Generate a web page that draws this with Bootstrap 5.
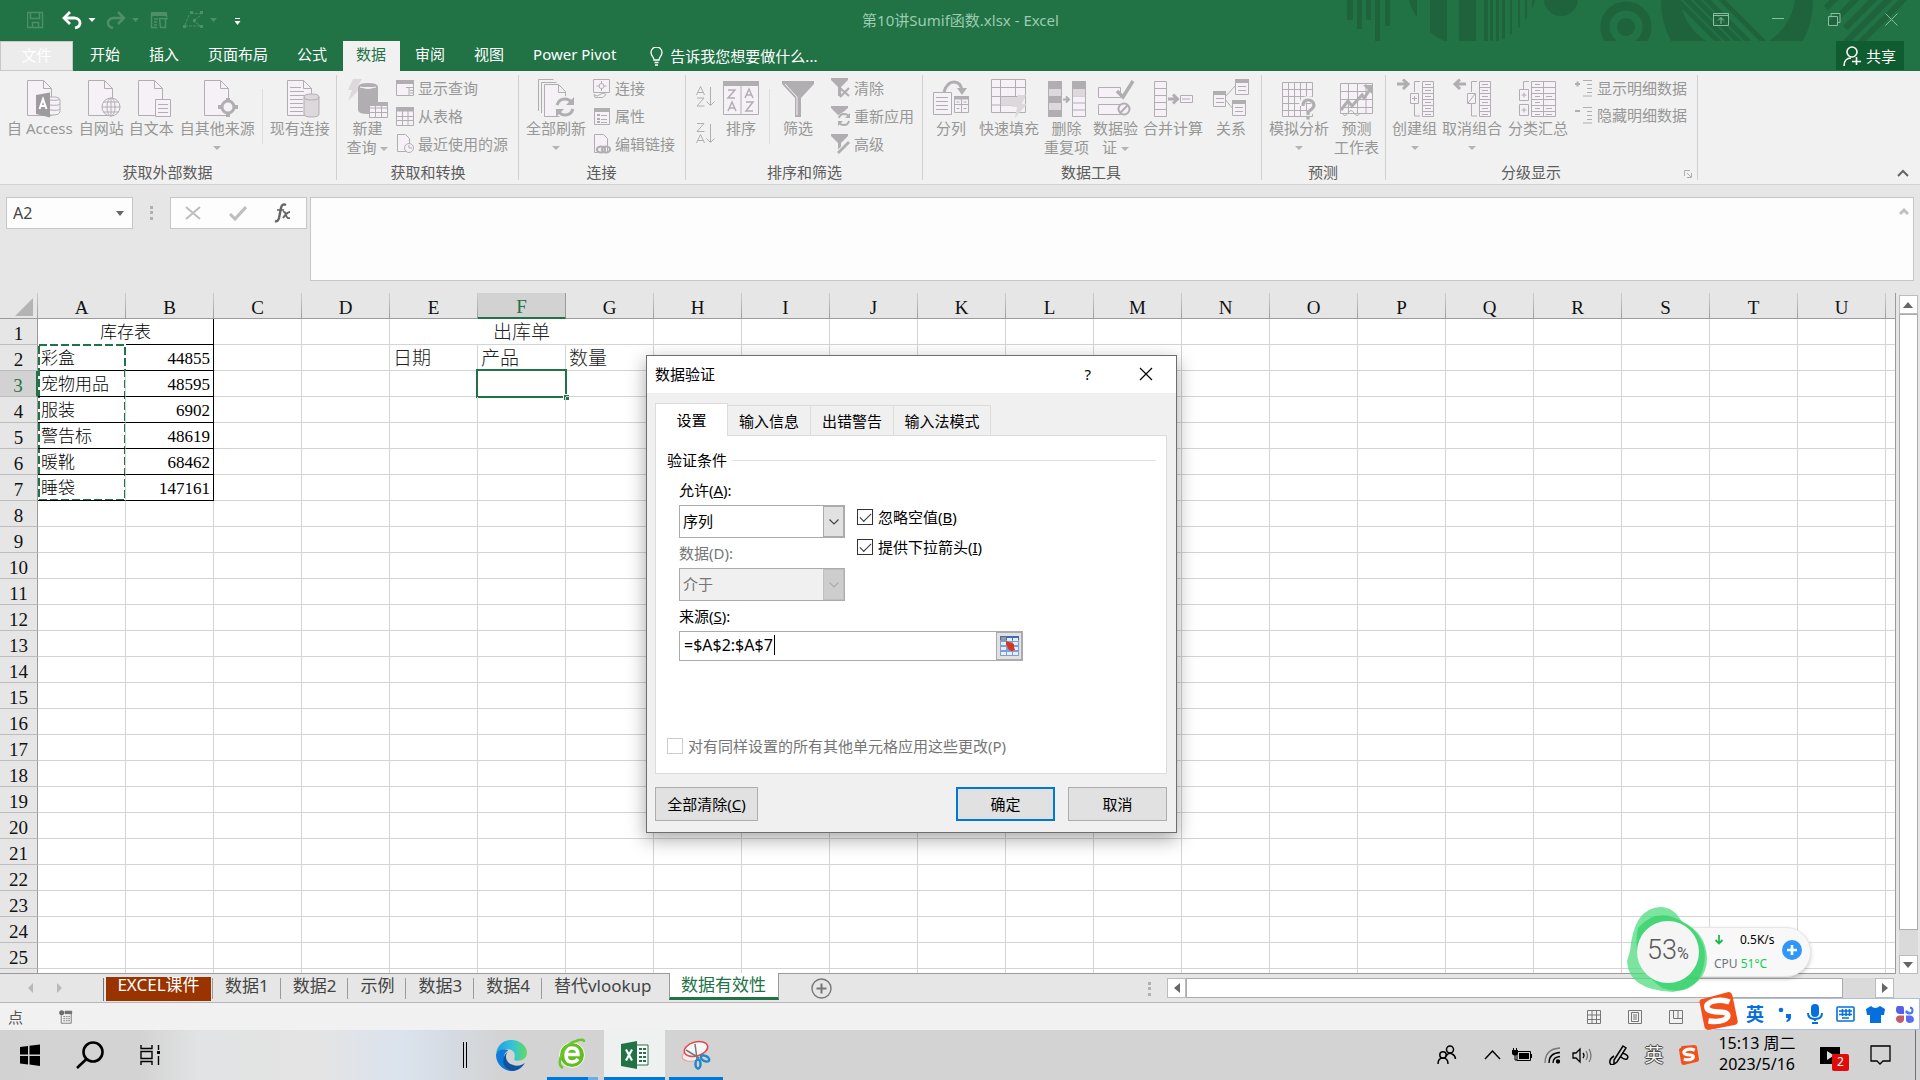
<!DOCTYPE html>
<html lang="zh-CN">
<head>
<meta charset="utf-8">
<meta name="viewport" content="width=device-width, initial-scale=1">
<title>第10讲Sumif函数.xlsx - Excel</title>
<link href="https://cdn.jsdelivr.net/npm/bootstrap@5.3.0/dist/css/bootstrap.min.css" rel="stylesheet">
<style>
:root{--xl:#217346;--line:#d4d4d4;--chrome:#e6e6e6}
body{font-family:"Noto Sans","Noto Sans CJK SC",sans-serif;font-size:15px;line-height:20px;color:#000;background:var(--chrome);overflow:hidden}
button{font:inherit;color:inherit;background:none;border:0;padding:0}
svg{display:block;flex:none}
a{color:inherit;text-decoration:none}
/* title */
.titlebar{background:var(--xl);color:#9ccbb0;height:41px}
.title-side{flex:1 1 0}
.title-name{margin:0 26px 2px 0}
.art{right:0;top:0}
.qat{padding:0 0 2px 27px}
.win button{width:57px;height:38px;display:flex;align-items:center;justify-content:center}
.tabs-row{background:var(--xl);height:30px;color:#fff}
.tabs-row .nav-link{padding:0 14px 0 15px;line-height:26px;height:30px;color:#fff;border-radius:0}
.tabs-row .file-tab{width:73px;margin-right:2px;padding:0;text-align:center;background:#ececec;border:1px solid #c8c8c8}
.tabs-row .nav-link.active{background:#f1f1f1;color:var(--xl);width:57px;margin-left:2px;padding:0 0 0 13px}
.tell{padding-left:20px;gap:7px}
.share{background:#0f5c30;height:29px;width:68px;margin-right:16px;padding-left:7px;gap:4px}
/* ribbon */
.ribbon{background:#f1f1f1;height:114px;border-bottom:1px solid #d2d2d2;color:#979797}
.rgroup{padding-top:3px;position:relative}
.rgroup::after{content:"";position:absolute;right:0;top:4px;bottom:4px;width:1px;background:#d0d0d0}
.rgroup h2{font-size:15px;line-height:20px;color:#5c5c5c;margin:4px 0 0;padding-right:6px;font-weight:400;text-align:center}
.g1{width:337px;padding-left:4px}.g2{width:182px;padding-left:6px}.g3{width:167px;padding-left:4px}.g4{width:237px;padding-left:6px}
.g5{width:339px;padding-left:3px}.g6{width:124px;padding-left:4px}.g7{width:312px;padding-left:4px}
.g1 .tools{gap:1px}
.g1 .big svg.ic{margin-left:8px}
.g7 h2{padding-right:26px}
.g7 .sml{height:27px}
.tools{height:84px}
.big{display:flex;flex-direction:column;align-items:center;padding:5px 3px 0;line-height:19px;white-space:nowrap}
.big svg.ic{margin-bottom:2px}
.w2{width:50px}.w3{width:49px}.w4{width:66px}
.car{border:4px solid transparent;border-top-color:#b4b4b4;border-bottom:0;display:inline-block;width:0;height:0}
.big>.car{margin-top:8px}
.sml{display:flex;align-items:center;height:28px;gap:4px;white-space:nowrap}
.rsep{width:1px;height:55px;margin:15px 3px 0 3px;background:#dcdcdc}
.ic{fill:none;stroke:#b1aeb2;stroke-width:1;overflow:visible}
.pf{fill:#f5f1f7}.df{fill:#b1aeb2;stroke:none}.lf{fill:#dcd8dc;stroke:none}
.lnch{right:6px;bottom:6px}
/* formula bar */
.fbar{padding:12px 6px 0;height:108px}
.namebox{width:127px;height:32px;border:1px solid #c6c6c6;background:#fdfdfd}
.namebox input{border:0;background:none;width:90px;padding:0 0 0 6px;font-size:16px;color:#444;line-height:24px}
.fbtns{width:137px;height:32px;border:1px solid #c6c6c6;background:#fdfdfd;margin-left:16px;padding:0 14px}
.ftext{height:84px;border:1px solid #c6c6c6;background:#fdfdfd;resize:none;margin-left:3px}
/* sheet */
.book{flex:1 1 0;min-height:0}
.sheet{background:#fff;border-right:1px solid #9b9b9b;border-bottom:1px solid #9b9b9b;overflow:hidden;margin-right:3px}
.xl{table-layout:fixed;border-collapse:separate;border-spacing:0;width:1974px;font-family:"Liberation Serif","Noto Sans CJK SC",serif}
.xl th{font-weight:400;font-size:19px;text-align:center;background:var(--chrome);padding:3px 0 0;line-height:21px;color:#111;height:26px}
.xl thead th{border-bottom:1px solid #9b9b9b;border-right:1px solid;border-image:linear-gradient(#cfcfcf,#9b9b9b) 1;height:26px}
.xl tbody th{border-right:1px solid #9b9b9b;border-bottom:1px solid #bdbdbd;padding-right:6px;padding-left:6px}
.xl td{border-right:1px solid var(--line);border-bottom:1px solid var(--line);height:26px;padding:3px 3px 0;line-height:22px;font-size:19px;font-weight:300;white-space:nowrap;overflow:visible;position:relative;color:#222}
.xl .inv{font-size:17px;border-bottom-color:#000;color:#000}
.xl .bk{border-right-color:#000}
.xl .num{text-align:right;padding-right:3px}
.xl thead th.on{background:#d2d2d2;color:var(--xl);border-image:none;border-right-color:#9b9b9b;border-bottom:2px solid var(--xl)}
.xl tbody th.on{background:#d2d2d2;color:var(--xl);border-right:2px solid var(--xl)}
.ants{position:absolute;left:0;top:-1px;width:89px;height:157px;pointer-events:none}
.cursor-box{position:absolute;left:-2px;top:-2px;right:-2px;bottom:-2px;border:2px solid var(--xl)}
.cursor-box::after{content:"";position:absolute;right:-4px;bottom:-4px;width:6px;height:6px;background:var(--xl);border:1px solid #fff;border-right:0;border-bottom:0}
.vsb{width:20px;margin-right:2px;padding-top:2px}
.sb-btn{background:#fff;border:1px solid #bcbcbc;display:flex;align-items:center;justify-content:center;flex:none}
.vsb .sb-btn{height:19px}
.vthumb{background:#fff;border:1px solid #ababab;height:616px}
.track{background:#dadada}
/* sheet tabs */
.stabs{height:29px;border-bottom:1px solid #b6b6b6;font-size:17px;line-height:20px;color:#444}
.stabs .tb{padding:0 11px 5px 12px;height:21px;border-left:1px solid #9b9b9b;margin-top:4px;line-height:15px}
.stabs .red{background:#993300;color:#fff;margin:3px 1px 0 2px;border:0;width:105px;text-align:center;padding:0;height:24px;line-height:15px}
.stabs .act{background:#fff;color:var(--xl);width:110px;height:27px;margin:-1px 0 0 6px;border:1px solid #9b9b9b;border-top:0;border-bottom:3px solid var(--xl);padding:0;text-align:center;line-height:23px}
.hsb{margin-right:26px;height:20px;margin-top:4px}
.hsb .sb-btn{width:19px}
.hthumb{background:#fff;border:1px solid #ababab;width:657px}
.status{height:27px;background:#f1f1f1;color:#555;padding:0 0 0 8px}
.views{gap:27px;margin-right:237px}
/* taskbar */
.task{height:50px;background:linear-gradient(90deg,#d2d2d2 0,#d3d3d3 140px,#e2e3e4 200px,#e4e4e4 320px,#dbe3ee 400px,#d5dbe3 450px,#d3d3d3 500px,#d3d3d3 100%)}
.tk{height:50px;display:flex;align-items:center;justify-content:center;flex:none}
.tk-run{border-bottom:3px solid #0078d7;padding-top:3px}
.tk360{width:63px}.tkxl{width:61px}.tksnip{width:54px}
.clock{width:100px;font-size:16px;line-height:21px;padding-bottom:2px}
.b30{width:30px}.b34{width:34px}.b36{width:36px}.b46{width:46px}.b54{width:54px}.b60{width:60px}
/* dialog */
.dlg{left:646px;top:355px;width:531px;border:1px solid #6e6e6e;background:#f0f0f0;box-shadow:0 6px 18px rgba(0,0,0,.35)}
.dlg-head{background:#fff;height:37px;padding:0 23px 2px 8px}
.dlg-body{padding:10px 9px 11px 8px}
.dtabs{height:32px;align-items:flex-end}
.dtabs button{height:30px;border:1px solid #dcdcdc;border-left:0;border-bottom:0;line-height:30px}
.dtabs .cur{height:33px;width:73px;background:#fff;border-left:1px solid #dcdcdc;margin-bottom:-1px;z-index:1;line-height:31px}
.t4{width:83px}.t5{width:97px}
.panel{background:#fff;border:1px solid #dcdcdc;height:339px;padding:13px 10px 0 11px;width:512px}
.panel .cap{height:22px;gap:5px}
.fields{padding:7px 0 0 12px}
.fl{display:block;height:24px;line-height:24px;margin-bottom:3px}
.combo{width:166px;height:33px;border:1px solid #ababab;margin-bottom:3px;background:#fff}
.combo select{appearance:none;border:0;background:none;flex:1;padding:0 0 1px 3px;color:#000;font:inherit;opacity:1}
.combo .arr{width:21px;background:#e1e1e1;border:1px solid #ababab;display:flex;align-items:center;justify-content:center}
.combo.off{background:#f0f0f0}.combo.off select{color:#767676}.combo.off .arr{background:#cdcdcd;border-color:#c0c0c0}
.dim{color:#767676}
.ck{height:30px;gap:5px}
.ck input{appearance:none;width:16px;height:16px;border:1px solid #333;margin:0;background:#fff;flex:none;display:grid;place-items:center}
.ck input:checked::after{content:"";width:11px;height:6px;border:solid #333;border-width:0 0 1px 1px;rotate:-45deg;margin-top:-3px}
.ck input:disabled{border-color:#ccc}
.src{width:344px;height:30px;border:1px solid #ababab;margin-left:12px}
.src input{border:0;flex:1;padding:0 0 3px 4px;outline:0;font-size:16px;color:#000;background:#fff;min-width:0;caret-color:transparent}
.src button{width:26px;background:#e1e1e1;border:1px solid #ababab;display:grid;place-items:center}
.caret-bar{left:94px;top:3px;width:1px;height:20px;background:#000}
.dbtns{margin-top:13px;gap:13px}
.db{height:34px;background:#e1e1e1;border:1px solid #adadad;width:99px}
.db.wide{width:103px}.db.ok{border:2px solid #0078d7}
/* floating widgets */
.ball{left:1626px;top:906px;width:188px;height:88px}
.pill{position:absolute;left:40px;top:21px;width:145px;height:50px;border-radius:25px;background:#f8f8f8;border:1px solid #e6e6e6;box-shadow:0 2px 4px rgba(0,0,0,.2);padding:2px 9px 0 47px;font-size:12px}
.pct{position:absolute;left:21px;top:28px;font-family:Roboto,sans-serif;font-size:27px;line-height:32px;color:#5a5a5a;font-weight:300}
.pct span{font-size:16px;font-weight:400}
.temp{color:#0bd24f}
.ime{right:0;top:998px;width:222px;height:32px;padding-left:42px}
.ime-bg{position:absolute;left:16px;right:0;top:0;bottom:0;background:#fff;border:1px solid #aebfe3}
.ime-logo{position:absolute;left:0;top:-6px}
.ime .it{position:relative;width:30px;flex:none;display:flex;align-items:center;justify-content:center;color:#0570dd;font-weight:700;font-size:18px}
.cnt{position:absolute;left:25px;top:24px;width:17px;height:17px;background:#e00b0b;color:#fff;border-radius:2px;font-size:12px;line-height:16px;text-align:center}
.outl{font-size:19px;color:#f4f4f4;text-shadow:1px 0 #444,-1px 0 #444,0 1px #444,0 -1px #444}
</style>
</head>
<body class="d-flex flex-column vh-100 position-relative">
<svg width="0" height="0" class="position-absolute"><defs>
<symbol id="page" viewBox="0 0 26 38" overflow="visible"><path d="M.5 1.500h16l8 8v27h-24z" fill="#f5f1f7"/><path d="M16.500 1.500v8h8" fill="none"/></symbol>
</defs></svg>

<header class="titlebar d-flex align-items-stretch position-relative">
 <svg class="art position-absolute" width="580" height="71" viewBox="1340 0 580 71" fill="#1e633c">
  <defs><clipPath id="c1"><circle cx="1472" cy="-19" r="66"/></clipPath><clipPath id="c2"><circle cx="1737" cy="1" r="59"/></clipPath></defs>
  <path d="M1347 0h6v20h-6zM1357 0h5v29h-5zM1366 0h5v20h-5zM1375 0h5v41h-5zM1385 0h5v26h-5z"/>
  <g clip-path="url(#c1)"><path d="M1400 0h17v60h-17zM1430 0h17v60h-17zM1459 0h17v60h-17zM1484 0h4v60h-4zM1490 0h3v60h-3zM1496 0h3v60h-3zM1502 0h3v60h-3zM1510 0h2v60h-2zM1518 0h2v60h-2zM1525 0h2v60h-2zM1532 0h3v60h-3z"/></g>
  <circle cx="1561" cy="-1" r="17"/><circle cx="1626" cy="27" r="21" fill="none" stroke="#1e633c" stroke-width="9"/><circle cx="1626" cy="27" r="9"/>
  <path fill-rule="evenodd" d="M1661 0c0 28 12 52 34 65h84c22-13 34-37 34-65h-18a58 58 0 0 1-115 0z"/>
  <g clip-path="url(#c2)" stroke="#1e633c" stroke-width="5"><path d="M1667 -10l80 80M1677 -10l80 80M1687 -10l80 80M1697 -10l75 75M1712 -10l75 75" /></g>
  <g stroke="#1e633c" stroke-width="6"><path d="M1826 8l10-10M1830 25l30-30M1845 28l36-36M1834 54l66-66M1856 47l55-55"/></g>
 </svg>
 <div class="title-side d-flex align-items-center qat position-relative">
  <svg width="220" height="20" viewBox="27 9 220 20" fill="none" stroke="#4c8f68">
   <path d="M27.500 11.500h15v15h-15zM30.500 11.500v6h9v-6M32.500 26.500v-5h6v5" stroke-width="1.500"/>
   <path d="M66 17h9q5 1 5 5t-5 5" stroke="#fff" stroke-width="2.800"/><path d="M70 11l-6 6 6 6" stroke="#fff" stroke-width="2.800"/>
   <path d="M88.500 17h7l-3.500 4z" fill="#fff" stroke="none"/>
   <path d="M122 17h-9q-5 1-5 5t5 5M118 11l6 6-6 6" stroke-width="2.500"/><path d="M132 17h7l-3.500 4z" fill="#4c8f68" stroke="none"/>
   <path d="M151.500 13v13.500h6M166.500 16v-3M154 18h4M154 21h3M154 24h3M159.500 17.500h6v9h-5zM165 17.500h3" stroke-width="1.500"/><path d="M151 11h16v4h-16z" fill="#4c8f68" stroke="none"/>
   <path d="M185 25h17M191 12l10 1M189 14l-4 10M200 15l-7 5 8 5" stroke-dasharray="3 1"/><path d="M190 10h3v3h-3zM200 10h3v3h-3zM183 24h3v3h-3zM200 24h3v3h-3zM193 18h3v3h-3z" fill="#4c8f68" stroke="none"/>
   <path d="M210 17h7l-3.500 4z" fill="#4c8f68" stroke="none"/><path d="M235 17.500h5" stroke="#fff"/><path d="M234.500 20h6l-3 4z" fill="#fff" stroke="none"/>
  </svg>
 </div>
 <div class="title-name align-self-center position-relative">第10讲Sumif函数.xlsx - Excel</div>
 <div class="title-side d-flex justify-content-end win position-relative">
  <button aria-label="功能区显示选项"><svg width="16" height="13" fill="none" stroke="#8dbda0"><path d="M.5.500h15v12h-15zM.5 2.500h15M8 11V5M5 7.500l3-3 3 3"/></svg></button>
  <button aria-label="最小化"><svg width="12" height="12" stroke="#8dbda0"><path d="M0 5.500h12"/></svg></button>
  <button aria-label="还原"><svg width="13" height="13" fill="none" stroke="#8dbda0"><path d="M.5 3.500h9v9h-9zM3 3V.500h9v9h-2"/></svg></button>
  <button aria-label="关闭"><svg width="13" height="13" stroke="#8dbda0"><path d="M.5.500l12 12M12.500.500l-12 12"/></svg></button>
 </div>
</header>

<nav class="tabs-row d-flex align-items-start position-relative">
 <a class="nav-link file-tab" href="#">文件</a><a class="nav-link" href="#">开始</a><a class="nav-link" href="#">插入</a><a class="nav-link" href="#">页面布局</a><a class="nav-link" href="#">公式</a><a class="nav-link active" href="#">数据</a><a class="nav-link" href="#">审阅</a><a class="nav-link" href="#">视图</a><a class="nav-link" href="#">Power Pivot</a>
 <button class="tell d-flex align-items-center h-100"><svg width="13" height="19" fill="none" stroke="#fff" stroke-width="1.300"><path d="M4 13c0-3-3-4-3-7.500a5.500 5.500 0 0 1 11 0C12 9 9 10 9 13zM4.500 15.500h4M5 18h3"/></svg>告诉我您想要做什么...</button>
 <button class="share d-flex align-items-center ms-auto"><svg width="19" height="20" fill="none" stroke="#fff" stroke-width="1.600"><circle cx="9" cy="6" r="5"/><path d="M1 20c0-5 3-8 7-8M13.500 11v8M9 15.500h9"/></svg>共享</button>
</nav>

<section class="ribbon d-flex">
 <div class="rgroup g1"><div class="tools d-flex align-items-start">
  <button class="big"><svg class="ic" width="34" height="38"><use href="#page" width="26" height="38"/><path class="pf" d="M17 18h12q4 1 4 3v12q-1 3-6 3h-10zM23 21q8 1 10-1M23 26q8 1 10-1M23 31q8 1 10-1"/><path d="M9 16l14-2.500v25L9 35z" fill="#9e9b9f" stroke="none"/><path d="M12.500 30l3.500-10 3.500 10M14 27h4" stroke="#fff" stroke-width="2"/></svg>自 Access</button>
  <button class="big w3"><svg class="ic" width="34" height="38"><use href="#page" width="26" height="38"/><g class="pf"><circle cx="23" cy="28" r="9"/><ellipse cx="23" cy="28" rx="4" ry="9"/></g><path d="M14 28h18M15.500 23h15M15.500 33h15M23 19v18"/></svg>自网站</button>
  <button class="big w3"><svg class="ic" width="34" height="38"><use href="#page" width="26" height="38"/><path class="pf" d="M17.500 20.500h15v17h-15z"/><path d="M20 25.500h10M20 29.500h10M20 33.500h10"/></svg>自文本</button>
  <button class="big"><svg class="ic" width="34" height="38"><use href="#page" width="26" height="38"/><circle cx="24" cy="28" r="6" fill="#f5f1f7" stroke-width="3"/><path d="M24 19v4M24 33v5M14 28h4M30 28h4" stroke-width="4"/></svg>自其他来源<span class="car"></span></button>
  <span class="rsep"></span>
  <button class="big"><svg class="ic" width="34" height="38"><use href="#page" width="26" height="38"/><path d="M3 8.500h11M3 12.500h14M3 16.500h17M3 20.500h13M3 24.500h13M3 28.500h13M3 32.500h13"/><path d="M17 18q0-3 7.500-3t7.500 3v17q0 3-7.500 3T17 35z" fill="#dcd8dc"/><path d="M17 18q0 3 7.500 3t7.500-3"/></svg>现有连接</button>
 </div><h2>获取外部数据</h2></div>

 <div class="rgroup g2"><div class="tools d-flex align-items-start">
  <button class="big w3"><svg class="ic" width="40" height="38"><path class="lf" d="M5 0h9L9 8h5L0 22l4-11H0z"/><path class="df" d="M10 8q0-4 10-4t10 4v23q0 4-10 4t-10-4z"/><path class="pf" d="M12 8q8 3 16 0" fill="none" stroke="#f1f1f1"/><path class="pf" d="M21.500 23.500h18v15h-18zM21.500 29h18M21.500 33.500h18M27.500 24v14M33.500 24v14"/><path class="df" d="M21 23h19v4H21z"/></svg>新建<span class="text-nowrap">查询 <span class="car align-middle"></span></span></button>
  <div class="ms-1">
   <button class="sml"><svg class="ic" width="18" height="18"><path class="pf" d="M.5 1.500h17v15H.5z"/><path class="df" d="M0 1h18v4H0z"/><path d="M13 8v8M10 8.500h7M14 11.500h3M14 14h3"/></svg>显示查询</button>
   <button class="sml"><svg class="ic" width="18" height="20"><path class="pf" d="M.5 1.500h17v18H.5zM.5 10.500h17M.5 14.500h17M6.500 4v16M12 4v16"/><path class="df" d="M0 1h18v4.500H0z"/></svg>从表格</button>
   <button class="sml"><svg class="ic" width="18" height="20"><path class="pf" d="M1.500.500h8l4 4v13h-12z"/><circle cx="13" cy="14" r="4.500" fill="#f5f1f7"/><path d="M13 11v3h3"/></svg>最近使用的源</button>
  </div>
 </div><h2>获取和转换</h2></div>

 <div class="rgroup g3"><div class="tools d-flex align-items-start">
  <button class="big w4"><svg class="ic" width="38" height="38"><path d="M1.500 32V.500h15M4.500 34V3.500h15" /><path class="pf" d="M7.500 5.500h14l7 7v25h-21zM21.500 5.500v8h7"/><circle cx="28" cy="28" r="11" fill="#f1f1f1" stroke="none"/><path d="M20 26q2-6 8-6 4 0 6 3M36 30q-2 6-8 6-4 0-6-3" stroke-width="3"/><path class="df" d="M37 18v8h-8zM19 38v-8h8z"/></svg>全部刷新<span class="car"></span></button>
  <div class="ms-1">
   <button class="sml"><svg class="ic" width="18" height="19"><path class="pf" d="M.5.500h16v13H.5z"/><circle cx="8.500" cy="7" r="2.500"/><path d="M8.500 2v3M8.500 9v3M3.500 7h3M10.500 7h3M1 15.500q3 3 6 0t6 0l-3 3H2z"/></svg>连接</button>
   <button class="sml"><svg class="ic" width="18" height="19"><path class="pf" d="M1.500 1.500h15v16h-15z"/><path class="df" d="M1 1h16v4H1zM4 7h3v2H4zM4 11h3v2H4zM4 14h3v2H4z"/><path d="M8 8.500h6M8 12.500h6M8 15.500h6"/></svg>属性</button>
   <button class="sml"><svg class="ic" width="18" height="20"><path class="pf" d="M1.500.500h9l4 4v14h-13z"/><ellipse cx="8" cy="15.500" rx="4" ry="3" stroke-width="2.200" fill="#f1f1f1"/><ellipse cx="13" cy="15.500" rx="4" ry="3" stroke-width="2.200"/></svg>编辑链接</button>
  </div>
 </div><h2>连接</h2></div>

 <div class="rgroup g4"><div class="tools d-flex align-items-start">
  <div class="d-flex flex-column pt-2 ps-1">
   <button class="pt-1 pb-3" aria-label="升序"><svg class="ic" width="20" height="21" stroke-width="1.500"><path d="M.5 9L4.500.500 8.500 9M2 6.500h5M1 12h7L1 20h7.500M14.500 1v18M10.500 15.500l4 4 4-4"/></svg></button>
   <button aria-label="降序"><svg class="ic" width="20" height="21" stroke-width="1.500"><path d="M1 .500h7L1 8.500h7.500M.5 20l4-8.500 4 8.500M2 17.500h5M14.500 1v18M10.500 15.500l4 4 4-4"/></svg></button>
  </div>
  <button class="big w2"><svg class="ic" width="36" height="38"><path class="pf" d="M.5 2.500h35v33H.5z"/><path class="df" d="M0 2h36v5H0z"/><path d="M18 7v28"/><path d="M5 11h7l-7 8h7M5 32l4-9 4 9M6 29h6M22 19l4-9 4 9M23 16h6M23 23h7l-7 9h7" stroke-width="1.500"/></svg>排序</button>
  <span class="rsep"></span>
  <button class="big w2"><svg class="ic" width="34" height="38"><path class="df" d="M1 2h32v3L20 19v19h-6V19L1 5z"/><path d="M4 5l12 13v18" stroke="#f5f1f7"/></svg>筛选</button>
  <div class="ms-1 ps-1">
   <button class="sml"><svg class="ic" width="19" height="20"><path class="df" d="M0 0h17v2l-7 7v9H7V9L0 2z"/><path d="M9 10l9 8M18 10l-9 9" stroke-width="2.200"/></svg>清除</button>
   <button class="sml"><svg class="ic" width="19" height="20"><path class="df" d="M0 0h17v2l-7 6v10H7V9L0 2z"/><circle cx="13" cy="13.500" r="7" fill="#f1f1f1" stroke="none"/><path d="M8 12q1-4 5-4t5 3M18 15q-1 4-5 4t-5-3" stroke-width="2"/><path class="df" d="M19 7v5h-5zM7 20v-5h5z"/></svg>重新应用</button>
   <button class="sml"><svg class="ic" width="19" height="20"><path class="df" d="M0 0h17v2l-7 7v9H7V9L0 2z"/><path d="M18 8L7 19" stroke="#f1f1f1" stroke-width="5"/><path d="M18 8L7 19" stroke-width="2.800"/></svg>高级</button>
  </div>
 </div><h2>排序和筛选</h2></div>

 <div class="rgroup g5"><div class="tools d-flex align-items-start">
  <button class="big w2"><svg class="ic" width="38" height="38"><path class="pf" d="M1.500 13.500h18v22h-18zM22.500 17.500h14v16h-14zM22.500 25.500h14M29.500 18v15"/><path class="df" d="M22 17h15v3.500H22z"/><path d="M4 18.500h12M4 22.500h12M4 26.500h12M4 30.500h12M24.500 23h3M31.500 23h3M24.500 29.500h3M31.500 29.500h3"/><path d="M12 13Q15 3 22 3q7 0 8 9" stroke-width="3"/><path class="df" d="M25 9h10l-5 7z"/></svg>分列</button>
  <button class="big w4"><svg class="ic" width="38" height="38"><path class="pf" d="M1.500.500h34v33h-34zM1.500 8.500h34M1.500 17.500h34M1.500 26h34M10.500 0v34M25.500 0v17"/><path class="lf" d="M11 18h18v8H11zM28 16h8l-4 9h5L25 39l2-11h-5z"/></svg>快速填充</button>
  <button class="big w3"><svg class="ic" width="38" height="38"><path class="df" d="M0 2h14v36H0z"/><path class="lf" d="M1 10h12v7H1zM1 24h12v7H1z"/><path class="pf" d="M24.500 2.500h13v35h-13zM24.500 24h13M24.500 31h13M24.500 17h13"/><path class="df" d="M24 2h14v8H24z"/><path class="lf" d="M25 10h12v7H25z"/><path d="M15 20.500h6M18 17.500l3 3-3 3" stroke-width="2"/></svg>删除<span>重复项</span></button>
  <button class="big w3"><svg class="ic" width="38" height="38"><path class="pf" d="M1.500 8.500h22v10h-22zM1.500 25.500h22v10h-22z"/><path d="M20 12l6 6L36 2" stroke-width="3.500"/><circle cx="27" cy="30" r="5.500" fill="#f5f1f7" stroke-width="2"/><path d="M23.500 33.500l7-7" stroke-width="2"/></svg>数据验<span>证 <span class="car align-middle"></span></span></button>
  <button class="big w4"><svg class="ic" width="38" height="38"><path class="pf" d="M.5 2.500h12v35H.5zM.5 9.500h12M.5 16.500h12M.5 23.500h12M.5 30.500h12M26.500 16.500h12v7h-12z"/><path d="M14 20h8M19 15.500l4.500 4.500-4.500 4.500" stroke-width="3"/><path d="M28 20h8"/></svg>合并计算</button>
  <button class="big w2"><svg class="ic" width="38" height="38"><path d="M13 18L24 6M13 20l8 10"/><path class="pf" d="M1.500 12.500h12v15h-12zM23.500.500h13v15h-13zM20.500 21.500h13v15h-13z"/><path class="df" d="M1 12h13v4H1zM23 0h14v4H23zM20 21h14v4H20z"/><path d="M4 19.500h8M4 23.500h8M26 7.500h8M26 11.500h8M23 28.500h8M23 32.500h8"/></svg>关系</button>
 </div><h2>数据工具</h2></div>

 <div class="rgroup g6"><div class="tools d-flex align-items-start">
  <button class="big w4"><svg class="ic" width="36" height="38"><path class="pf" d="M1.500 3.500h30v34h-30zM7.500 3.500v34M13.500 3.500v34M19.500 3.500v34M25.500 3.500v34M1.500 10.500h30M1.500 17.500h30M1.500 24.500h30M1.500 31.500h30"/><path d="M21 27q0-7 6-7t7 6q0 4-6 8v3" stroke="#f1f1f1" stroke-width="6"/><path d="M22 27q0-6 5-6t6 5q0 3-6 7v3M27 37.500v3" stroke-width="3.200"/></svg>模拟分析<span class="car"></span></button>
  <button class="big w3"><svg class="ic" width="36" height="38"><path class="pf" d="M1.500 4.500h32v30h-32zM9.500 4.500v30M18.500 4.500v30M27 4.500v30M1.500 12.500h32M1.500 20.500h32M1.500 28.500h32"/><path d="M2 31l7-9 4 5 10-11 2 3 7-10" stroke-width="3"/><path class="df" d="M24 6h9v9z"/><path d="M3 34q3 5 6 0t6 0 6 0"/></svg>预测<span>工作表</span></button>
 </div><h2>预测</h2></div>

 <div class="rgroup g7"><div class="tools d-flex align-items-start">
  <button class="big w3"><svg class="ic" width="38" height="38"><path d="M1 5h10M7 .500L12 5l-5 5" stroke-width="3"/><path d="M24 2.500h-5.500V13M18.500 25v12H24"/><path class="pf" d="M14.500 14.500h8v10h-8zM26.500 2.500h11v35h-11zM26.500 8.500h11M26.500 14.500h11M26.500 20.500h11M26.500 26.500h11M26.500 32.500h11"/><path d="M16 19.500h5M18.500 17v5M29 5.500h6M29 11.500h6M29 17.500h6M29 23.500h6M29 29.500h6M29 35.500h6"/></svg>创建组<span class="car"></span></button>
  <button class="big w4"><svg class="ic" width="38" height="38"><path d="M13 5H3M7 .500L2 5l5 5" stroke-width="3"/><path d="M24 2.500h-5.500V13M18.500 25v12H24"/><path class="pf" d="M14.500 14.500h8v10h-8zM26.500 2.500h11v35h-11zM26.500 8.500h11M26.500 14.500h11M26.500 20.500h11M26.500 26.500h11M26.500 32.500h11"/><path d="M15 24l7-9M29 5.500h6M29 11.500h6M29 17.500h6M29 23.500h6M29 29.500h6M29 35.500h6"/></svg>取消组合<span class="car"></span></button>
  <button class="big w4"><svg class="ic" width="38" height="38"><path d="M10 2.500H4.500V10"/><path class="pf" d="M.5 10.500h9v11h-9zM.5 25.500h9v11h-9zM12.500 2.500h24v35h-24zM24.500 2.500v35M12.500 8.500h24M12.500 14.500h24M12.500 20.500h24M12.500 26.500h24M12.500 32.500h24"/><path d="M2.500 16h5M5 13.500v5M2.500 31h5M5 28.500v5M16 5.500h5M16 11.500h5M16 17.500h5M16 23.500h5M16 29.500h5M16 35.500h5M27 17.500h6M27 29.500h6M27 35.500h6"/></svg>分类汇总</button>
  <div class="ms-1">
   <button class="sml"><svg class="ic" width="18" height="18"><path d="M0 5h5M2.500 2.500v5" stroke-width="2"/><path d="M8 1.500h9M12 5.500h5M12 9.500h5M12 13.500h5M8 17h9"/></svg>显示明细数据</button>
   <button class="sml"><svg class="ic" width="18" height="18"><path d="M0 5h5" stroke-width="2"/><path d="M8 1.500h9M12 5.500h5M12 9.500h5M12 13.500h5M8 17h9"/></svg>隐藏明细数据</button>
  </div>
 </div><h2>分级显示</h2>
 <svg class="ic lnch position-absolute" width="8" height="8"><path d="M.5 6V.500H6M3 3l4 4M7.500 3v4.500H3"/></svg></div>
 <button class="ms-auto align-self-end me-2 pb-1" aria-label="折叠功能区"><svg width="17" height="11" fill="none" stroke="#666" stroke-width="2"><path d="M3 7l5-5 5 5"/></svg></button>
</section>

<section class="fbar d-flex align-items-start">
 <div class="namebox d-flex align-items-center justify-content-between pe-2"><input aria-label="名称框" value="A2"><svg width="8" height="5"><path d="M0 0h8L4 5z" fill="#666"/></svg></div>
 <svg class="ms-3 mt-2" width="5" height="16" fill="#b0b0b0"><path d="M1 1h3v3H1zM1 6h3v3H1zM1 12h3v3H1z"/></svg>
 <div class="fbtns d-flex align-items-center justify-content-between">
  <button aria-label="取消"><svg width="16" height="14" stroke="#bdbdbd" stroke-width="2"><path d="M1 1l14 12M15 1L1 13"/></svg></button>
  <button aria-label="输入"><svg width="18" height="15" fill="none" stroke="#bdbdbd" stroke-width="3"><path d="M1 8l5 5L17 1"/></svg></button>
  <button aria-label="插入函数"><svg width="18" height="22" fill="none" stroke="#666"><path d="M12 3q-4-2-5 3L5 16q-1 4-4 3" stroke-width="2.400"/><path d="M3 8h7" stroke-width="1.600"/><path d="M9 10q2-1 3 3t4 3M16 10q-3 0-7 6" stroke-width="1.800"/></svg></button>
 </div>
 <div class="flex-grow-1 position-relative d-flex"><textarea class="ftext flex-grow-1" aria-label="编辑栏"></textarea><svg class="position-absolute end-0 top-0 mt-2 me-1" width="12" height="12" fill="none" stroke="#c0c0c0" stroke-width="3"><path d="M2 9l4-4 4 4"/></svg></div>
</section>

<main class="book d-flex">
 <div class="sheet flex-grow-1"><table class="xl" id="grid"></table></div>
 <div class="vsb d-flex flex-column">
  <button class="sb-btn" aria-label="向上"><svg width="10" height="6"><path d="M5 0l5 6H0z" fill="#666"/></svg></button>
  <div class="vthumb"></div><div class="track flex-grow-1"></div>
  <button class="sb-btn" aria-label="向下"><svg width="10" height="6"><path d="M0 0h10L5 6z" fill="#666"/></svg></button>
 </div>
</main>

<nav class="stabs d-flex align-items-start">
 <svg width="103" height="28" fill="#b9b9b9"><path d="M33 9v10l-5-5zM57 9v10l5-5z"/></svg>
 <div class="d-flex">
 <span class="border-start border-secondary mt-1"></span><a class="red" href="#">EXCEL课件</a><a class="tb" href="#">数据1</a><a class="tb" href="#">数据2</a><a class="tb" href="#">示例</a><a class="tb" href="#">数据3</a><a class="tb" href="#">数据4</a><a class="tb" href="#">替代vlookup</a><a class="act" href="#">数据有效性</a></div>
 <button class="mt-1 ms-4 ps-2" aria-label="新工作表"><svg width="21" height="21" fill="none" stroke="#777"><circle cx="10.500" cy="10.500" r="9.500" stroke-width="1.400"/><path d="M5.500 10.500h10M10.500 5.500v10" stroke-width="2"/></svg></button>
 <svg class="ms-auto me-3 mt-2" width="3" height="14" fill="#b0b0b0"><path d="M0 0h3v3H0zM0 5h3v3H0zM0 11h3v3H0z"/></svg>
 <div class="hsb d-flex">
  <button class="sb-btn" aria-label="向左"><svg width="6" height="10"><path d="M6 0v10L0 5z" fill="#666"/></svg></button><div class="hthumb"></div><div class="track ps-4"><span class="ps-2"></span></div>
  <button class="sb-btn" aria-label="向右"><svg width="6" height="10"><path d="M0 0v10l6-5z" fill="#666"/></svg></button>
 </div>
</nav>

<footer class="status d-flex align-items-center">
 <span>点</span>
 <svg class="ms-4 ps-2" width="28" height="16" viewBox="-5 0 24 16" fill="none" stroke="#6d6d6d"><path d="M2.500 6v9.500h12V3"/><path d="M7 1h8v3H7z" fill="#6d6d6d"/><circle cx="3" cy="3" r="3" fill="#6d6d6d" stroke="none"/><path d="M5 7.500h2M8 7.500h2M11 7.500h2M5 10h2M8 10h2M11 10h2M5 12.500h2M8 12.500h2M11 12.500h2"/></svg>
 <div class="views d-flex ms-auto">
  <svg width="14" height="14" fill="none" stroke="#777"><path d="M.5.500h13v13H.5zM5 0v14M9.500 0v14M0 5h14M0 9.500h14"/></svg>
  <svg width="14" height="14" fill="none" stroke="#777"><path d="M.5.500h13v13H.5zM3.500 2.500h7v9h-7zM5 5h4M5 7h4M5 9h4"/></svg>
  <svg width="14" height="14" fill="none" stroke="#777"><path d="M.5.500h13v13H.5zM4.500.500v8h9M9 .500v8"/></svg>
 </div>
</footer>

<footer class="task d-flex align-items-stretch">
 <button class="tk b60" aria-label="开始"><svg width="20" height="22"><path d="M0 3l8-1v8.500H0zM9.500 1.800L20 .500v10H9.500zM0 12h8v8.500l-8-1zM9.500 12H20v10l-10.500-1.500z"/></svg></button>
 <button class="tk b60" aria-label="搜索"><svg width="28" height="28" fill="none" stroke="#000" stroke-width="2.600"><circle cx="17" cy="11" r="9.500"/><path d="M10.500 18L1 27"/></svg></button>
 <button class="tk b60" aria-label="任务视图"><svg width="20" height="20" fill="none" stroke="#000" stroke-width="1.400"><path d="M1 0v3.500h11V0M1 20v-3.500h11V20M1 6.500h11v7H1zM18.500 0v5M18.500 11v9"/><path d="M17 6h3v3h-3z" fill="#000" stroke="none"/></svg></button>
 <svg class="align-self-center" width="301" height="26"><path d="M283.500 0v26M286.500 0v26" stroke="#000"/></svg>
 <button class="tk b60" aria-label="Edge"><svg width="31" height="31" viewBox="0 0 30 30"><defs><linearGradient id="e1" x2="1"><stop stop-color="#1f9de0"/><stop offset=".55" stop-color="#36c3d8"/><stop offset="1" stop-color="#61dc5b"/></linearGradient></defs><path d="M0 14C1 5 7 0 15 0s15 6 15 12c0 5-4 8-9 8-3 0-4-1-3-3 1-5-2-8-7-8C5 9 1 11 0 14z" fill="url(#e1)"/><path d="M0 14c2-5 8-6 12-4-4 2-5 6-4 10 2 6 8 8 13 8-3 2-8 3-13 0C3 25 0 20 0 14z" fill="#0d7bd7"/><path d="M12 11c-4 3-3 11 4 13 5 2 10 0 12-2-2 4-7 8-12 8-6-1-9-5-9-10 0-4 2-7 5-9z" fill="#1054a0"/></svg></button>
 <button class="tk tk360" aria-label="360浏览器"><svg width="51" height="50"><circle cx="25" cy="25" r="12" fill="#62bd21"/><circle cx="25" cy="25" r="12.500" fill="none" stroke="#eef9e4"/><path d="M31 29q-2 3-6 3-6 0-6-7t6-7q6 0 6 6.500H19" fill="none" stroke="#fff" stroke-width="3.500"/><path d="M16 38q-6-3-1-14T29 11q8-3 8 1" fill="none" stroke="#6cc52a" stroke-width="2.500"/><path d="M0 47h41v3H0z" fill="#0078d7"/><path d="M41 47h10v3H41z" fill="#68aee8"/></svg></button>
 <button class="tk tk-run tkxl bg-light bg-opacity-75" aria-label="Excel"><svg width="28" height="28"><path d="M14 4h13v20H14z" fill="#fff" stroke="#217346"/><path d="M18 7h3v2h-3zM22 7h3v2h-3zM18 11h3v2h-3zM22 11h3v2h-3zM18 15h3v2h-3zM22 15h3v2h-3zM18 19h3v2h-3zM22 19h3v2h-3z" fill="#217346"/><path d="M0 3l16-3v28L0 25z" fill="#217346"/><path d="M5 8.500l6 11M11 8.500l-6 11" stroke="#fff" stroke-width="2.200"/></svg></button>
 <button class="tk tk-run tksnip ms-1" aria-label="截图工具"><svg width="30" height="30" fill="none"><ellipse cx="12" cy="15" rx="11" ry="6" transform="rotate(-12 12 15)" stroke="#eb9a9c" fill="#eee"/><ellipse cx="15" cy="9" rx="12" ry="7" transform="rotate(-15 15 9)" stroke="#e4484d" stroke-width="1.500" fill="#f7f7f7"/><path d="M14 4l2 15M5 10l13 8" stroke="#777" stroke-width="1.500"/><ellipse cx="17" cy="24" rx="2.500" ry="4.500" stroke="#2387cc" stroke-width="2.500"/><ellipse cx="24" cy="18.500" rx="4.500" ry="2.500" transform="rotate(25 24 18.500)" stroke="#2387cc" stroke-width="2.500"/></svg></button>
 <div class="ms-auto d-flex">
  <button class="tk b60" aria-label="人脉"><svg width="20" height="20" fill="none" stroke="#000" stroke-width="1.500"><circle cx="13" cy="4.500" r="3.500"/><circle cx="6" cy="10" r="3.200"/><path d="M1 19q0-6 5-6t5 6M9 11q3-4 6-2 3 1 3.500 5"/></svg></button>
  <button class="tk b30" aria-label="显示隐藏的图标"><svg width="17" height="10" fill="none" stroke="#000" stroke-width="1.400"><path d="M1 9l7.500-8L16 9"/></svg></button>
  <span class="tk b30"><svg width="20" height="14"><path d="M5 3.500h13.500v9H5z" stroke="#000" fill="none"/><path d="M7 5h10v6H7zM18 6h2v4h-2zM0 2h6v4q-3 3-6 0zM1 0h1v3H1zM4 0h1v3H4z"/><path d="M3 6v6h2" stroke="#000" fill="none"/></svg></span>
  <span class="tk b30"><svg width="17" height="17" fill="none" stroke="#000" stroke-width="1.300"><path d="M1 16Q1 2 16 1" stroke="#777"/><path d="M5 16Q5 6 16 5.500M9 16q0-6 7-6.500"/><circle cx="14" cy="14.500" r="1.500" fill="#000"/></svg></span>
  <span class="tk b30"><svg width="21" height="17" fill="none" stroke="#000" stroke-width="1.300"><path d="M1 6h3l4-4v13l-4-4H1zM11 6q2 2.500 0 5"/><path d="M14 4q3 4.500 0 9M17 2q4 6.500 0 13" stroke="#777"/></svg></span>
  <span class="tk b36 ms-1"><svg width="20" height="20" fill="none" stroke="#000" stroke-width="1.500"><path d="M14 1l3 2-9 14-3 2 0-4zM5 11q-5 3-4 7t7-1M13 8q8 2 5 6-3 1-6-2"/></svg></span>
  <span class="tk b34 outl">英</span>
  <span class="tk b36"><svg width="20" height="20" viewBox="0 0 38 38"><path d="M4 5Q3 3 6 2L29 0q4 0 5 3l4 24q0 4-3 5L9 38q-4 0-5-4L0 9q0-3 4-4z" fill="#f2511b"/><path d="M30 10Q22 6 14 9q-8 4-3 8 4 2 11 2 7 1 5 5-4 6-18 3" fill="none" stroke="#fff" stroke-width="6"/></svg></span>
  <span class="tk clock text-center"><span>15:13 周二<br>2023/5/16</span></span>
  <span class="tk b46 position-relative"><svg width="20" height="17"><path d="M0 0h20v17H0z"/><path d="M7 4l7 4.500L7 13z" fill="#ddd"/></svg><span class="cnt">2</span></span>
  <button class="tk b54" aria-label="通知"><svg width="21" height="20" fill="none" stroke="#000" stroke-width="1.300"><path d="M1 1h19v15h-7l-3 3-3-3H1z"/></svg></button>
  <span class="ms-2 me-1 border-start border-secondary"></span>
 </div>
</footer>

<section class="dlg position-absolute" role="dialog" aria-label="数据验证">
 <div class="dlg-head d-flex align-items-center"><span class="me-auto">数据验证</span>
  <button class="me-5" aria-label="帮助">?</button>
  <button aria-label="关闭对话框"><svg width="14" height="14" stroke="#000" stroke-width="1.200"><path d="M1 1l12 12M13 1L1 13"/></svg></button></div>
 <div class="dlg-body">
  <div class="dtabs d-flex"><button class="cur">设置</button><button class="t4">输入信息</button><button class="t4">出错警告</button><button class="t5">输入法模式</button></div>
  <div class="panel d-flex flex-column">
   <div class="cap d-flex align-items-center"><span>验证条件</span><span class="flex-grow-1 border-top"></span></div>
   <div class="fields d-flex">
    <div>
     <label class="fl" for="allow">允许(<u>A</u>):</label>
     <div class="combo d-flex"><select id="allow"><option>序列</option></select><span class="arr"><svg width="10" height="6" fill="none" stroke="#444" stroke-width="1.200"><path d="M.5.500L5 5 9.500.500"/></svg></span></div>
     <label class="fl dim" for="data">数据(D):</label>
     <div class="combo off d-flex"><select id="data" disabled><option>介于</option></select><span class="arr"><svg width="10" height="6" fill="none" stroke="#aaa" stroke-width="1.200"><path d="M.5.500L5 5 9.500.500"/></svg></span></div>
     <label class="fl" for="src">来源(<u>S</u>):</label>
    </div>
    <div class="ps-2 ms-1 pt-4">
     <label class="ck d-flex align-items-center"><input type="checkbox" checked><span>忽略空值(<u>B</u>)</span></label>
     <label class="ck d-flex align-items-center"><input type="checkbox" checked><span>提供下拉箭头(<u>I</u>)</span></label>
    </div>
   </div>
   <div class="src d-flex position-relative"><input id="src" value="=$A$2:$A$7"><span class="caret-bar position-absolute"></span><button aria-label="选择区域"><svg width="19" height="20"><path d="M0 0h19v20H0z" fill="#7e9fd6"/><path d="M0 0h19v4H0z" fill="#3e6db5"/><path d="M1 1h5v4H1z" fill="#999"/><path d="M7 2h5v3H7zM13 2h5v3h-5zM1 6h5v3H1zM1 11h5v3H1zM1 16h5v3H1zM7 16h5v3H7zM13 6h5v3h-5zM13 11h5v3h-5zM13 16h5v3h-5z" fill="#e6eefb"/><path d="M6 5l8 3v3l1 3-3 1-3-1-3-6z" fill="#d9341c"/></svg></button></div>
   <label class="ck dim d-flex align-items-center mt-auto mb-2"><input type="checkbox" disabled><span>对有同样设置的所有其他单元格应用这些更改(P)</span></label>
   <span class="pb-1"></span>
  </div>
  <div class="dbtns d-flex"><button class="db wide me-auto">全部清除(<u>C</u>)</button><button class="db ok">确定</button><button class="db">取消</button></div>
 </div>
</section>

<aside class="ball position-absolute">
 <div class="pill"><div class="d-flex align-items-center"><svg width="10" height="10" fill="none" stroke="#1fb84e" stroke-width="1.800"><path d="M5 0v8M1.500 5L5 8.500 8.500 5"/></svg><span class="ms-3">0.5K/s</span></div><div class="pt-1 text-secondary">CPU <span class="temp">51°C</span></div>
 <svg class="position-absolute end-0 top-0 mt-2 me-2" width="22" height="30"><circle cx="12" cy="14" r="10" fill="#2f96fa"/><path d="M7 14h10M12 9v10" stroke="#fff" stroke-width="2.600"/></svg></div>
 <svg class="position-absolute start-0 top-0" width="84" height="88"><path d="M4 45Q8 2 34 1q14 0 22 15 24 10 25 36 0 28-34 34Q2 84 1 55z" fill="#4fdc7f" opacity=".75"/><path d="M12 22q20-24 50-3 26 20 12 52-12 20-38 11Q4 60 12 22z" fill="#31d066" opacity=".7"/><circle cx="42" cy="46" r="31" fill="#f5f5f5"/></svg>
 <div class="pct">53<span>%</span></div>
</aside>

<aside class="ime position-absolute d-flex">
 <div class="ime-bg"></div>
 <svg class="ime-logo" width="41" height="38" viewBox="0 0 40 38"><path d="M4 7Q1 7 1 10l5 25q1 3 4 3l26-5q4-1 3-5L34 4q-1-4-4-4z" fill="#f2511b"/><path d="M31 10Q24 7 15 9q-9 3-6 8 3 3 12 3 10 0 8 5-4 6-19 4" fill="none" stroke="#fff" stroke-width="5.500"/></svg>
 <span class="it">英</span>
 <span class="it"><svg width="16" height="16" fill="#0570dd"><circle cx="4" cy="4" r="2.300"/><path d="M9 8h5v3q0 4-4 5l-1-1q2-1 2-3H9z"/></svg></span>
 <span class="it"><svg width="16" height="20" fill="none" stroke="#0570dd" stroke-width="2"><rect x="5" y="1" width="6" height="11" rx="3" fill="#0570dd"/><path d="M1 9q0 6 7 6t7-6M8 15v2M5 19h6"/></svg></span>
 <span class="it"><svg width="19" height="16" fill="none" stroke="#0570dd" stroke-width="1.600"><rect x="1" y="1" width="17" height="14" rx="1"/><path d="M3 5h13M3 8.500h13M6 12h7M6.500 3v7M10 3v7M13.500 3v7"/></svg></span>
 <span class="it"><svg width="19" height="17" fill="#0570dd"><path d="M5 0q4 4 9 0l5 3-1 6h-3v8H4V9H1L0 3z"/></svg></span>
 <span class="it"><svg width="18" height="17"><path d="M2 0h4q2 0 2 3v5H4Q0 8 0 4t2-4z" fill="#5560e8"/><path d="M14 1.500a3 3 0 1 1-3.500 3V6.500h3" fill="none" stroke="#4677f2" stroke-width="2"/><path d="M3 9.500h5V14q-1 3-4 3-4-1-4-4t3-3.500z" fill="#c55a70"/><path d="M10 9.500h5q3 1 3 4t-4 3.500q-4 0-4-3z" fill="#5a6cf0"/></svg></span>
</aside>

<script>
// Builds the worksheet: lettered columns A-U plus a partly visible one, 25 rows plus a sliver.
const cols = 'ABCDEFGHIJKLMNOPQRSTU'.split('').concat('');
const stock = [['彩盒',44855],['宠物用品',48595],['服装',6902],['警告标',48619],['暖靴',68462],['睡袋',147161]];
const order = {E:'日期',F:'产品',G:'数量'};
let h = '<colgroup><col style="width:38px">' + cols.map(() => '<col style="width:88px">').join('') + '</colgroup><thead><tr><th aria-label="全选"><svg class="ms-auto me-1" width="18" height="19"><path d="M18 0v18H0z" fill="#b4b4b4"/></svg></th>' + cols.map(c => `<th${c==='F'?' class="on"':''}>${c}</th>`).join('') + '</tr></thead><tbody>';
for (let r = 1; r <= 26; r++) {
  h += `<tr><th${r===3?' class="on"':''}>${r<26?r:''}</th>`;
  for (const c of cols) {
    if (r === 1 && c === 'A') { h += '<td class="inv bk text-center" colspan="2">库存表</td>'; continue; }
    if (r === 1 && c === 'E') { h += '<td class="text-center" colspan="3">出库单</td>'; continue; }
    if (r === 1 && c && 'BFG'.includes(c)) continue;
    if (r > 1 && r < 8 && c === 'A') { h += `<td class="inv">${stock[r-2][0]}${r===2?'<svg class="ants" fill="none" stroke="#217346" stroke-width="2"><rect x="1" y="1" width="86" height="155" stroke="#fff"/><rect x="1" y="1" width="86" height="155" stroke-dasharray="8 3"/></svg>':''}</td>`; continue; }
    if (r > 1 && r < 8 && c === 'B') { h += `<td class="inv bk num">${stock[r-2][1]}</td>`; continue; }
    if (r === 2 && order[c]) { h += `<td>${order[c]}</td>`; continue; }
    h += r === 3 && c === 'F' ? '<td><span class="cursor-box"></span></td>' : '<td></td>';
  }
  h += '</tr>';
}
document.getElementById('grid').innerHTML = h + '</tbody>';
</script>
<script src="https://cdn.jsdelivr.net/npm/bootstrap@5.3.0/dist/js/bootstrap.bundle.min.js"></script>
</body>
</html>
